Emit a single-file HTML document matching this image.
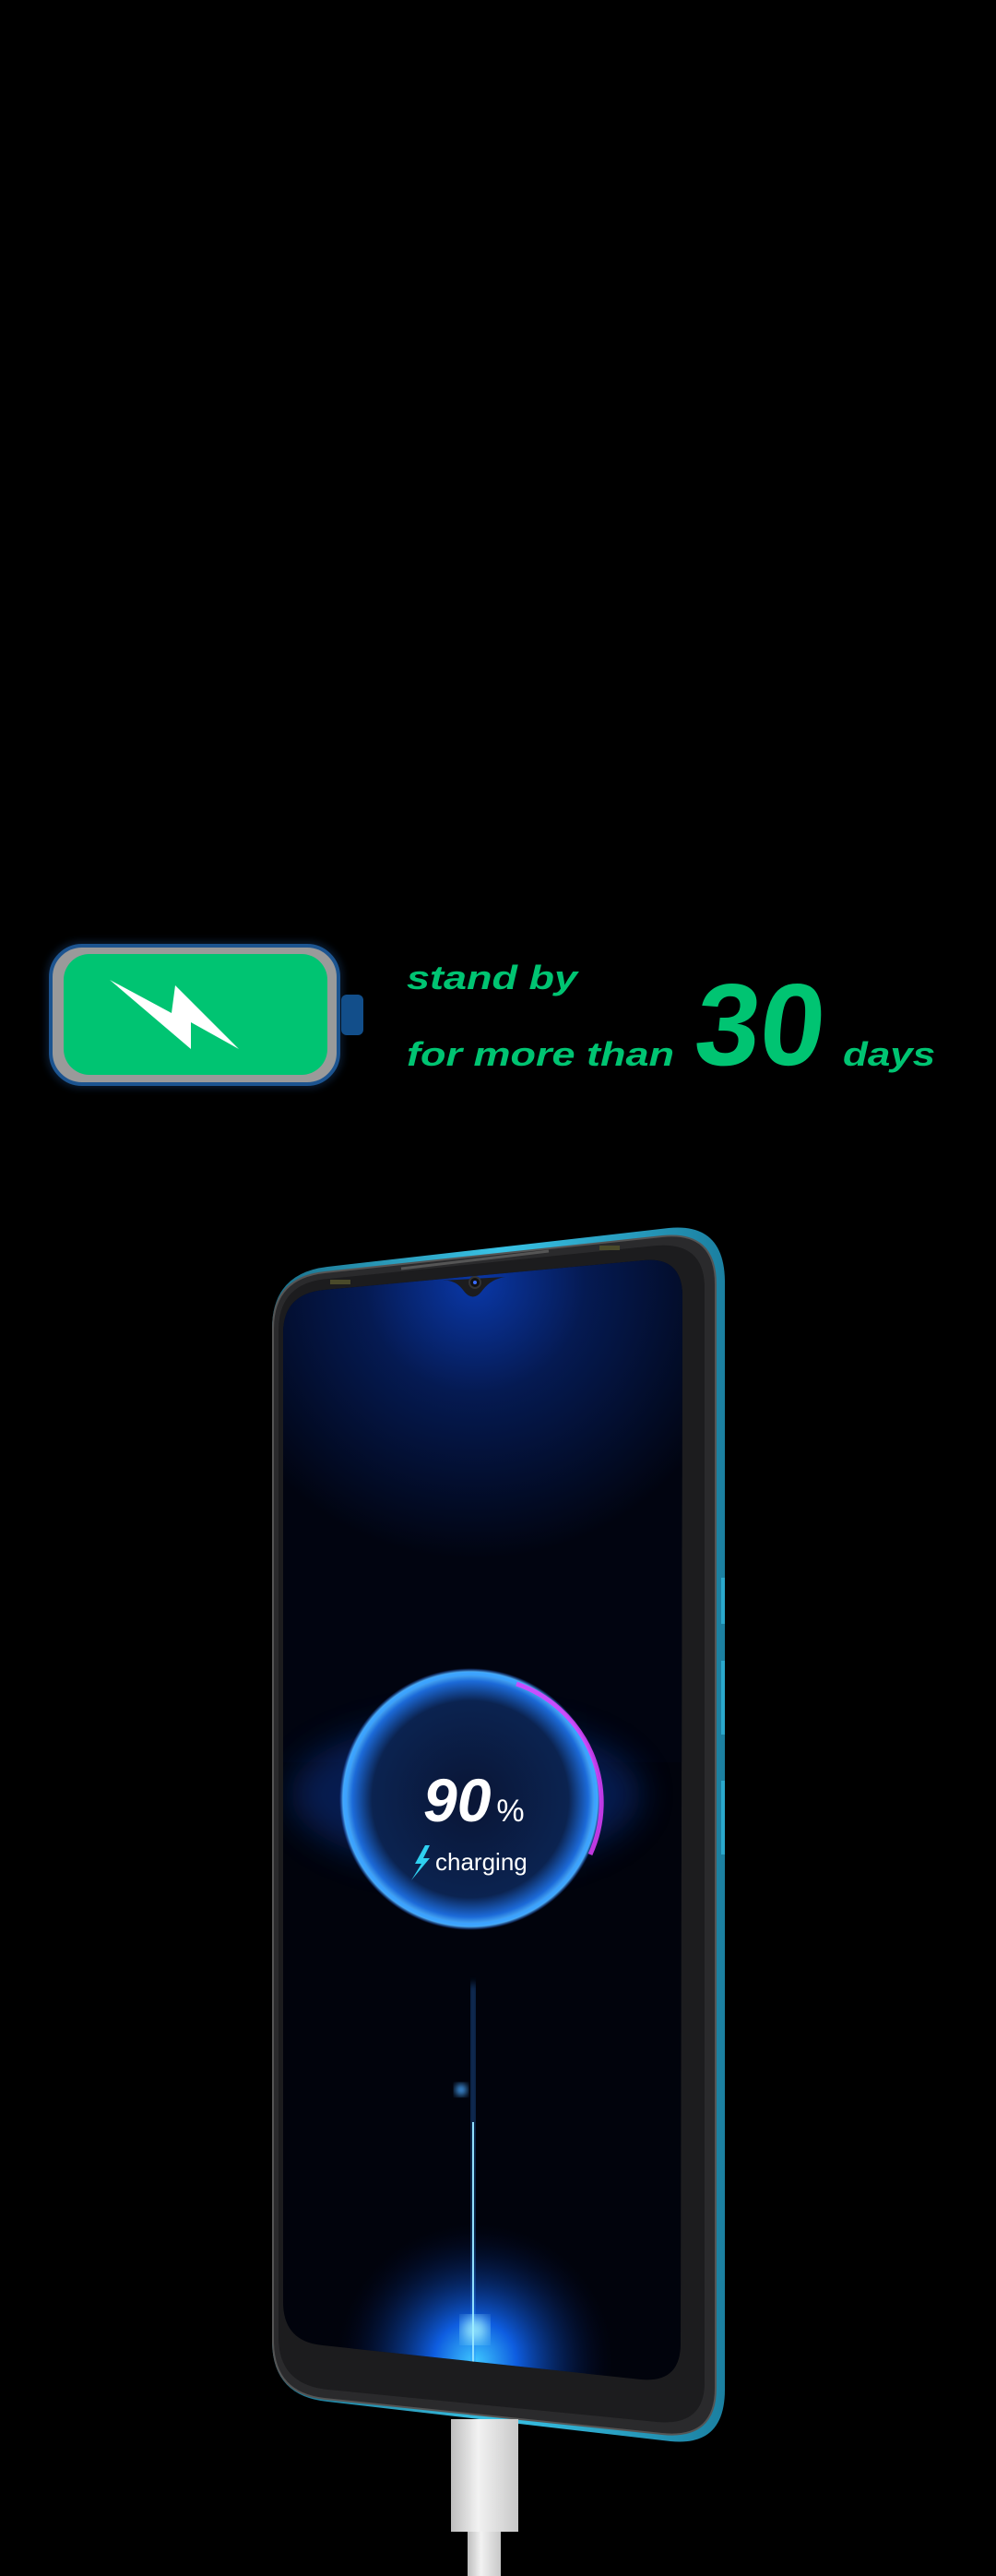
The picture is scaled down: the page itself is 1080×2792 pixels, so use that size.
<!DOCTYPE html>
<html><head><meta charset="utf-8"><style>
html,body{margin:0;padding:0;background:#000;}
body{width:1080px;height:2792px;position:relative;overflow:hidden;font-family:"Liberation Sans",sans-serif;}
.t{position:absolute;color:#00c472;font-weight:bold;font-style:italic;white-space:nowrap;transform-origin:0 100%;line-height:1;}
</style></head><body>
<svg width="1080" height="2792" style="position:absolute;left:0;top:0">
<defs>
<filter id="glow" x="-20%" y="-20%" width="140%" height="140%"><feGaussianBlur stdDeviation="4"/></filter>
<filter id="b8"><feGaussianBlur stdDeviation="8"/></filter>
<filter id="b20" x="-50%" y="-50%" width="200%" height="200%"><feGaussianBlur stdDeviation="18"/></filter>
<radialGradient id="topglow" cx="515" cy="1390" r="300" gradientUnits="userSpaceOnUse">
<stop offset="0" stop-color="#0a38a8"/><stop offset="0.4" stop-color="#051a52"/><stop offset="1" stop-color="#010410"/></radialGradient>
<radialGradient id="bub" cx="0.5" cy="0.5" r="0.5">
<stop offset="0" stop-color="#0a1535"/><stop offset="0.75" stop-color="#0b2350"/><stop offset="0.9" stop-color="#1c6ad8"/><stop offset="0.97" stop-color="#58c0ff"/><stop offset="1" stop-color="#2a6cff" stop-opacity="0"/></radialGradient>
<radialGradient id="botglow" cx="515" cy="2560" r="150" gradientUnits="userSpaceOnUse">
<stop offset="0" stop-color="#3fc8ff"/><stop offset="0.3" stop-color="#0e5de0"/><stop offset="1" stop-color="#020a30" stop-opacity="0"/></radialGradient>
<linearGradient id="rim" x1="0" x2="1"><stop offset="0" stop-color="#1a6f8a"/><stop offset="0.5" stop-color="#39c3e6"/><stop offset="1" stop-color="#1b7fa0"/></linearGradient>
<linearGradient id="cab" x1="0" x2="1"><stop offset="0" stop-color="#bdbdbd"/><stop offset="0.4" stop-color="#f2f2f2"/><stop offset="1" stop-color="#c8c8c8"/></linearGradient>
<clipPath id="scr"><path d="M352 1398 L698 1366 Q740 1362 740 1405 L738 2540 Q738 2583 695 2579 L350 2542 Q307 2538 307 2495 L307 1445 Q307 1402 352 1398 Z"/></clipPath>
</defs>

<!-- battery -->
<rect x="50" y="1020" width="322" height="160" rx="38" fill="#1a4a80" opacity="0.35" filter="url(#glow)"/>
<rect x="55" y="1025" width="312" height="150" rx="34" fill="#9a9a9a" stroke="#1c5490" stroke-width="4"/>
<rect x="69" y="1034" width="286" height="131" rx="28" fill="#00c472"/>
<rect x="370" y="1078" width="24" height="44" rx="6" fill="#124e8a"/>
<polygon points="119,1062 186,1098 190,1068 259,1137 207,1108 207,1137" fill="#fff"/>

<!-- phone body -->
<path d="M355 1373 L725 1331 Q785 1325 786 1388 L786 2590 Q786 2652 727 2646 L355 2603 Q295 2597 295 2537 L295 1440 Q295 1380 355 1373 Z" fill="url(#rim)"/>
<path d="M352 1379 L718 1340 Q776 1334 776 1392 L776 2588 Q776 2644 718 2638 L352 2600 Q296 2594 296 2537 L296 1440 Q296 1385 352 1379 Z" fill="#2a2a2c" stroke="#555" stroke-width="2"/>
<path d="M356 1386 L712 1350 Q764 1346 764 1396 L764 2582 Q764 2630 712 2625 L356 2590 Q302 2585 302 2533 L302 1442 Q302 1390 356 1386 Z" fill="#1c1c1e"/>
<rect x="782" y="1710" width="4" height="50" fill="#2aa8cc"/>
<rect x="782" y="1800" width="4" height="80" fill="#2aa8cc"/>
<rect x="782" y="1930" width="4" height="80" fill="#2aa8cc"/>
<line x1="435" y1="1375" x2="595" y2="1356" stroke="#555" stroke-width="3"/>
<rect x="358" y="1387" width="22" height="5" fill="#4a4a2a"/>
<rect x="650" y="1350" width="22" height="5" fill="#4a4a2a"/>

<!-- screen -->
<g clip-path="url(#scr)">
<rect x="300" y="1350" width="450" height="1250" fill="#01030c"/>
<rect x="300" y="1350" width="450" height="560" fill="url(#topglow)"/>
<ellipse cx="505" cy="1945" rx="190" ry="80" fill="#0a3aa0" opacity="0.45" filter="url(#b20)"/>
<rect x="300" y="2300" width="450" height="300" fill="url(#botglow)"/>
<rect x="511" y="2150" width="4" height="420" fill="#2d8cff" opacity="0.7" filter="url(#glow)"/>
<rect x="512" y="2300" width="2" height="260" fill="#8fe0ff"/>
<circle cx="500" cy="2265" r="6" fill="#4aa8ff" filter="url(#glow)"/>
<circle cx="515" cy="2525" r="14" fill="#9ff0ff" filter="url(#b8)"/>
<circle cx="510" cy="1950" r="142" fill="url(#bub)"/>
<circle cx="510" cy="1950" r="136" fill="none" stroke="#3aa0ff" stroke-width="4" opacity="0.8"/>
<path d="M560 1825 A136 136 0 0 1 640 2010" fill="none" stroke="#e040ff" stroke-width="5" opacity="0.85"/>
</g>
<!-- notch -->
<path d="M478 1388 Q493 1386 502 1398 Q512 1412 522 1400 Q532 1386 548 1384 Z" fill="#1c1c1e"/>
<circle cx="515" cy="1390" r="6" fill="#111" stroke="#333" stroke-width="2"/>
<circle cx="515" cy="1390" r="2" fill="#3a6cff"/>

<!-- charging bolt -->
<polygon points="461,2000 450,2020 457,2020 446,2038 466,2014 459,2014 466,2000" fill="#2fd0f0"/>

<!-- cable -->
<rect x="489" y="2622" width="73" height="122" fill="url(#cab)"/>
<rect x="507" y="2744" width="36" height="48" fill="url(#cab)"/>
</svg>

<div class="t" style="left:441px;top:1042px;font-size:36px;transform:scaleX(1.25)">stand by</div>
<div class="t" style="left:441px;top:1125px;font-size:36px;transform:scaleX(1.25)">for more than</div>
<div class="t" style="left:748px;top:1048px;font-size:126px;font-style:normal;transform:skewX(-6deg)">30</div>
<div class="t" style="left:914px;top:1125px;font-size:36px;transform:scaleX(1.22)">days</div>

<div style="position:absolute;left:459px;top:1918px;color:#fff;font-weight:bold;font-style:italic;font-size:66px;line-height:1;">90<span style="font-size:34px;font-style:normal;font-weight:normal;margin-left:6px">%</span></div>
<div style="position:absolute;left:472px;top:2005px;color:#fff;font-size:26px;line-height:1;">charging</div>
</body></html>
